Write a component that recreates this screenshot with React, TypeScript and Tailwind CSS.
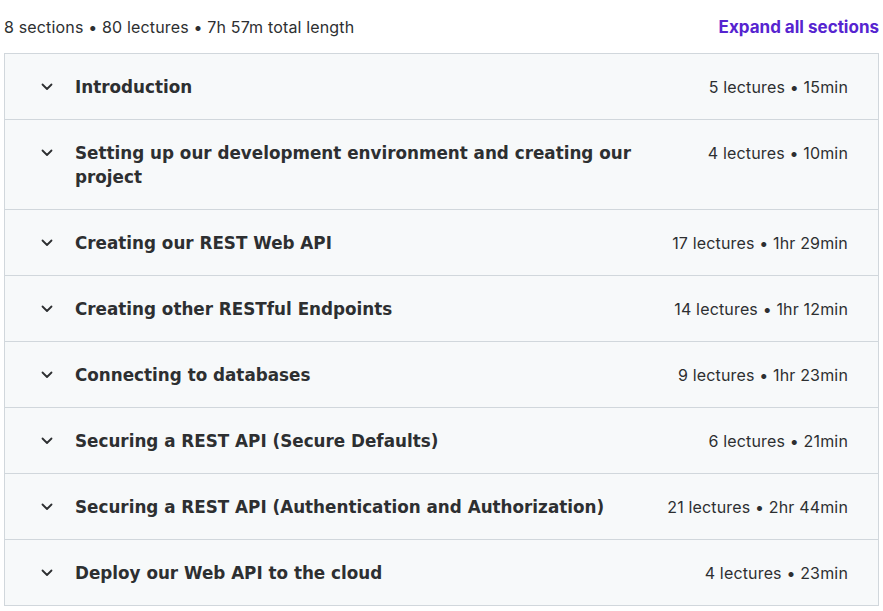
import React from 'react';

const sections = [
  { title: 'Introduction', meta: '5 lectures • 15min' },
  { title: 'Setting up our development environment and creating our project', meta: '4 lectures • 10min' },
  { title: 'Creating our REST Web API', meta: '17 lectures • 1hr 29min' },
  { title: 'Creating other RESTful Endpoints', meta: '14 lectures • 1hr 12min' },
  { title: 'Connecting to databases', meta: '9 lectures • 1hr 23min' },
  { title: 'Securing a REST API (Secure Defaults)', meta: '6 lectures • 21min' },
  { title: 'Securing a REST API (Authentication and Authorization)', meta: '21 lectures • 2hr 44min' },
  { title: 'Deploy our Web API to the cloud', meta: '4 lectures • 23min' },
];

function Chevron() {
  return (
    <svg viewBox="0 0 12 8" className="w-[12px] h-[8px] shrink-0 mt-[8px]" fill="none">
      <path d="M1.5 1.5 L6 6 L10.5 1.5" stroke="#2d2f31" strokeWidth="1.8" strokeLinecap="round" strokeLinejoin="round" />
    </svg>
  );
}

export default function App() {
  return (
    <div className="bg-white px-1 font-['Inter',sans-serif] text-[#2d2f31]">
      <div className="flex items-center justify-between pt-[15px] pb-[14px] leading-[24px]">
        <span className="text-[16px] tracking-[0.01em]">8 sections • 80 lectures • 7h 57m total length</span>
        <button className="text-[17px] font-bold text-[#5624d0]">Expand all sections</button>
      </div>
      <div className="border border-[#d1d7dc]">
        {sections.map((s, i) => (
          <div
            key={s.title}
            className={`flex items-start bg-[#f7f9fa] pl-[36px] pr-[30px] pt-[21px] pb-[20px] ${i > 0 ? 'border-t border-[#d1d7dc]' : ''}`}
          >
            <Chevron />
            <div className="ml-[22px] w-[580px] font-['DejaVu_Sans',sans-serif] text-[16.8px] font-bold leading-[24px] text-[#2d2f31]">
              {s.title}
            </div>
            <div className="ml-auto text-[16px] leading-[24px] whitespace-nowrap tracking-[0.01em]">{s.meta}</div>
          </div>
        ))}
      </div>
    </div>
  );
}
